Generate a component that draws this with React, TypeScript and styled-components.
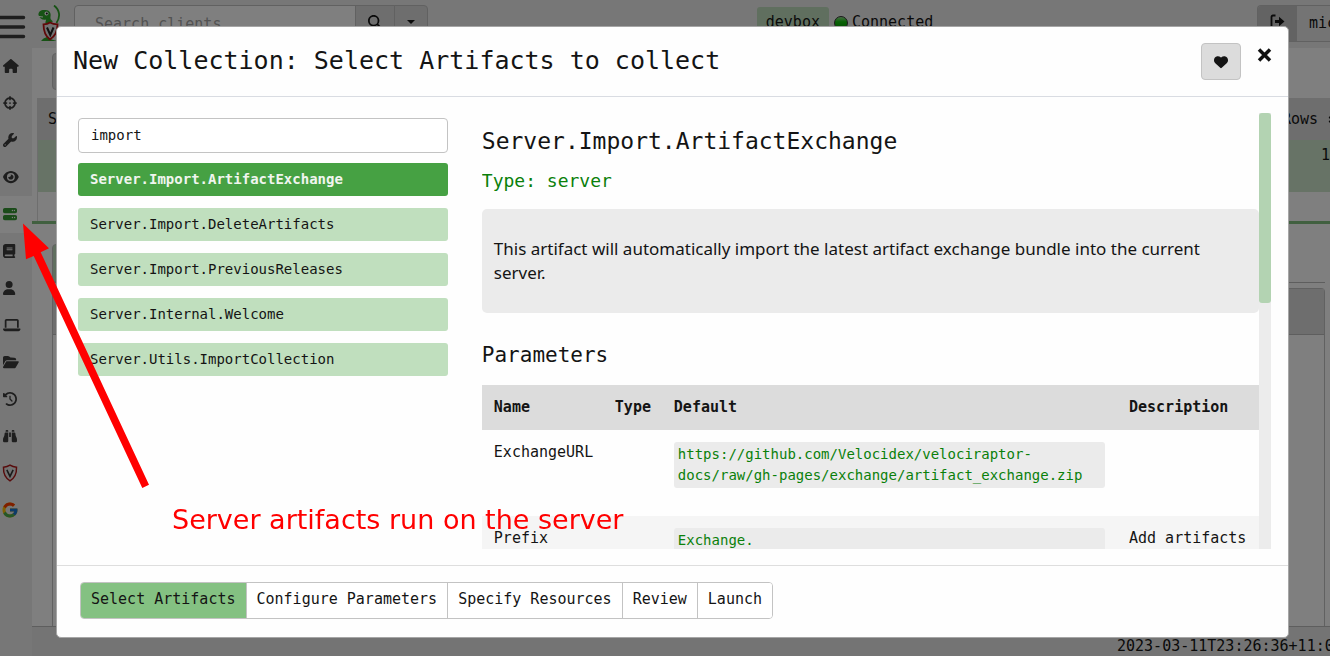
import React from "react";
import styled, { createGlobalStyle, css } from "styled-components";
import { IconContext } from "react-icons";
import {
  FaHouse,
  FaCrosshairs,
  FaWrench,
  FaEye,
  FaServer,
  FaBook,
  FaUser,
  FaLaptop,
  FaFolderOpen,
  FaClockRotateLeft,
  FaBinoculars,
  FaMagnifyingGlass,
  FaHeart,
  FaSort,
} from "react-icons/fa6";
import { FcGoogle } from "react-icons/fc";

const mono = '"DejaVu Sans Mono", "Liberation Mono", monospace';

const GlobalStyle = createGlobalStyle`
  *, *::before, *::after { box-sizing: border-box; }
  html, body { margin: 0; padding: 0; overflow: hidden; }
  body { font-family: ${mono}; font-size: 15px; line-height: 21px; color: #141414; background: #fff; }
  button, input { font: inherit; color: inherit; margin: 0; }
  button { cursor: pointer; }
  h1, h2, h3, p { margin: 0; font-weight: 400; }
`;

/* ---------- page behind the dialog ---------- */

const Page = styled.div`
  display: flex;
  flex-direction: column;
  height: 100vh;
  overflow: hidden;
`;

const TopBar = styled.header`
  flex: none;
  display: flex;
  justify-content: space-between;
  align-items: flex-start;
  height: 48px;
  padding-top: 5px;
  background: #efefef;
`;

const BarGroup = styled.div`
  display: flex;
  align-items: flex-start;
`;

const HostGroup = styled(BarGroup)`
  padding-left: 5px;
`;

const MenuButton = styled.button`
  width: 26px;
  height: 37px;
  padding: 8px 0 0;
  border: 0;
  background: none;
  svg { display: block; }
`;

const LogoBox = styled.div`
  width: 48px;
  padding-left: 12px;
  svg { display: block; }
`;

const SearchBox = styled.input`
  width: 282px;
  height: 37px;
  padding: 0 20px;
  border: 1px solid #c3c3c3;
  border-radius: 4px 0 0 4px;
  background: #fff;
  &::placeholder { color: #a4a4a4; opacity: 1; }
`;

const ToolButton = styled.button<{ $width: number; $last?: boolean }>`
  display: flex;
  align-items: center;
  justify-content: center;
  width: ${(p) => p.$width}px;
  height: 37px;
  padding: 0 0 4px;
  margin-left: -1px;
  border: 1px solid #c3c3c3;
  border-radius: ${(p) => (p.$last ? "0 4px 4px 0" : "0")};
  background: #dcdcdc;
`;

const Host = styled.button`
  height: 31px;
  padding: 0 9px;
  margin: 2px 5px 0 0;
  border: 0;
  border-radius: 3px;
  background: #c0dfbe;
`;

const Status = styled.span`
  display: flex;
  align-items: center;
  gap: 4px;
  height: 35px;
`;

const StatusLight = styled.i`
  width: 14px;
  height: 14px;
  border: 1px solid #333;
  border-radius: 50%;
  background: linear-gradient(#8fdc8a, #12c40c 40%, #0a9a06);
`;

const UserGroup = styled.div`
  display: flex;
  width: 73px;
  height: 37px;
  overflow: hidden;
  border: 1px solid #c3c3c3;
  border-right: 0;
  border-radius: 4px 0 0 4px;
  background: #e8e8e8;
`;

const LogoutButton = styled.button`
  flex: none;
  width: 39px;
  padding: 0;
  border: 0;
  background: #c6c6c6;
  svg { display: block; height: 15px; width: auto; margin: 0 auto 4px; }
`;

const UserName = styled.span`
  padding: 7px 12px;
`;

const Columns = styled.div`
  flex: 1;
  display: flex;
  min-height: 0;
`;

const SideBar = styled.nav`
  flex: none;
  width: 32px;
  background: #efefef;
`;

const SideLink = styled.a<{ $active?: boolean; $large?: boolean }>`
  display: flex;
  align-items: center;
  height: 37px;
  padding: 0 0 1px ${(p) => (p.$large ? 1 : 3)}px;
  color: ${(p) => (p.$active ? "#369634" : "#3c3c3c")};
  background: ${(p) => (p.$active ? "#fff" : "transparent")};
  svg { height: ${(p) => (p.$large ? 18 : 14)}px; width: 18px; }
`;

const Main = styled.main`
  flex: 1;
  min-width: 0;
  display: flex;
  flex-direction: column;
`;

const Actions = styled.div`
  height: 50px;
  padding: 5px 20px;
`;

const ActionBox = styled.div`
  width: 200px;
  height: 37px;
  border: 1px solid #c3c3c3;
  border-radius: 4px;
  background: #dcdcdc;
`;

const FlowTable = styled.table`
  width: calc(100% - 5px);
  margin-left: 5px;
  border-collapse: collapse;
  border-left: 1px solid #dcdcdc;
  th { height: 42px; padding: 0 10px; font-weight: 400; text-align: left; background: #dcdcdc; }
  th:last-child { padding: 0; width: 48px; }
  td { height: 52px; padding: 5px 0 0; vertical-align: top; text-align: right; background: #cfe6cd; }
`;

const SortHead = styled.span`
  display: flex;
  align-items: center;
  gap: 8px;
  width: 48px;
  svg { flex: none; }
`;

const Divider = styled.div`
  height: 29px;
  margin-left: 5px;
  border-left: 1px solid #dcdcdc;
`;

const Splitter = styled.div`
  height: 3px;
  flex: none;
  background: #83c181;
`;

const Details = styled.section`
  flex: 1;
  display: flex;
  flex-direction: column;
  padding: 20px 5px 0 20px;
`;

const TabStrip = styled.div`
  height: 39px;
  border-bottom: 1px solid #bdbdbd;
`;

const Tab = styled.div`
  width: 120px;
  height: 38px;
  border: 1px solid #c3c3c3;
  border-radius: 4px 4px 0 0;
  background: #c0dfbe;
`;

const Card = styled.div`
  flex: 1;
  margin-top: 5px;
  border: 1px solid #c3c3c3;
  border-bottom: 0;
  border-radius: 4px 4px 0 0;
`;

const CardHead = styled.div`
  height: 46px;
  border-bottom: 1px solid #bdbdbd;
  background: #dcdcdc;
`;

const Footer = styled.footer`
  flex: none;
  display: flex;
  justify-content: flex-end;
  height: 30px;
  padding-top: 9px;
  overflow: hidden;
  border-top: 1px solid #bdbdbd;
  background: #e8e8e8;
`;

const Clock = styled.time`
  flex: 0 0 213px;
  min-width: 0;
  white-space: nowrap;
`;

/* ---------- dialog ---------- */

const Backdrop = styled.div`
  position: fixed;
  inset: 0;
  padding: 26px 41px 18px 56px;
  background: rgba(0, 0, 0, 0.5);
`;

const Dialog = styled.div`
  border: 1px solid #a6a6a6;
  border-radius: 5px;
  background: #fefefe;
`;

const DialogHead = styled.div`
  display: flex;
  justify-content: space-between;
  align-items: flex-start;
  height: 70px;
  padding: 16px;
  border-bottom: 1px solid #d9dce2;
`;

const Title = styled.h1`
  font-size: 25px;
  line-height: 36px;
`;

const HeadButtons = styled.div`
  display: flex;
  align-items: flex-start;
  gap: 16px;
`;

const HeartButton = styled.button`
  display: flex;
  align-items: center;
  justify-content: center;
  width: 40px;
  height: 37px;
  padding: 0;
  border: 1px solid #c3c3c3;
  border-radius: 4px;
  background: #dcdcdc;
  svg { height: 14px; width: 14px; }
`;

const CloseButton = styled.button`
  width: 15px;
  height: 24px;
  padding: 0;
  border: 0;
  background: none;
  svg { display: block; }
`;

const DialogBody = styled.div`
  display: flex;
  gap: 34px;
  height: calc(100vh - 188px);
  padding: 16px 17px 16px 21px;
`;

const Picker = styled.div`
  flex: 0 0 31%;
  padding-top: 5px;
`;

const Filter = styled.input`
  display: block;
  width: 100%;
  height: 35px;
  padding: 0 12px 2px;
  border: 1px solid #c3c3c3;
  border-radius: 4px;
  font-size: 14px;
  background: #fff;
`;

const ArtifactList = styled.div`
  display: flex;
  flex-direction: column;
  gap: 12px;
  margin-top: 10px;
`;

const Artifact = styled.button<{ $active?: boolean }>`
  height: 33px;
  padding: 0 12px;
  border: 0;
  border-radius: 3px;
  font-size: 14px;
  text-align: left;
  background: #c0dfbe;
  ${(p) =>
    p.$active &&
    css`
      background: #46a143;
      color: #f0f5ef;
      font-weight: 700;
    `}
`;

const Viewer = styled.div`
  flex: 1;
  min-width: 0;
  display: flex;
`;

const Description = styled.article`
  flex: 1;
  min-width: 0;
  overflow: hidden;
`;

const ArtifactName = styled.h2`
  padding-top: 12px;
  font-size: 23px;
  line-height: 32px;
`;

const ArtifactType = styled.h3`
  padding: 12px 0 16px;
  font-size: 18px;
  line-height: 24px;
  color: #0a800a;
`;

const Summary = styled.p`
  padding: 28px 12px;
  border-radius: 5px;
  font: 17px/24px "Noto Sans", sans-serif;
  background: #ebebeb;
`;

const SectionTitle = styled.h3`
  padding: 30px 0 18px;
  font-size: 21px;
  line-height: 24px;
`;

const Parameters = styled.table`
  width: 100%;
  table-layout: fixed;
  border-collapse: collapse;
  th, td { padding: 12px 0 12px 12px; text-align: left; vertical-align: top; }
  th { background: #dcdcdc; }
  tbody tr:nth-child(even) { background: #f5f5f5; }
`;

const NameCol = styled.col`width: 121px;`;
const TypeCol = styled.col`width: 59px;`;
const DescriptionCol = styled.col`width: 142px;`;

const Code = styled.pre`
  margin: 0 12px 16px 0;
  padding: 2px 4px;
  border-radius: 3px;
  font-family: ${mono};
  font-size: 14px;
  line-height: 21px;
  color: #0a800a;
  background: #ebebeb;
`;

const ScrollTrack = styled.div`
  flex: none;
  width: 12px;
  background: #ececec;
`;

const ScrollThumb = styled.div`
  height: 190px;
  border-radius: 3px;
  background: #b3d3b2;
`;

const DialogFoot = styled.div`
  padding: 16px 23px 18px;
  border-top: 1px solid #dedede;
`;

const Steps = styled.div`
  display: inline-flex;
  vertical-align: top;
  height: 37px;
  overflow: hidden;
  border: 1px solid #c3c3c3;
  border-radius: 4px;
`;

const Step = styled.button<{ $active?: boolean }>`
  padding: 0 10px 2px;
  border: 0;
  background: ${(p) => (p.$active ? "#84c182" : "#fff")};
  & + & { border-left: 1px solid #c3c3c3; }
`;

/* ---------- annotation ---------- */

const Arrow = styled.svg`
  position: absolute;
  left: 0;
  top: 200px;
`;

const Note = styled.div`
  position: absolute;
  left: 172px;
  top: 504px;
  font: 27px/32px "DejaVu Sans", sans-serif;
  color: #ff0000;
  white-space: nowrap;
`;

const Shield = () => (
  <svg viewBox="0 0 14 16" aria-hidden="true">
    <path d="M7 1 Q4.500 2.600 1.200 2.800 C1 8 2 12 7 15 C12 12 13 8 12.800 2.800 Q9.500 2.600 7 1Z" fill="#e4e4e4" stroke="#b01818" strokeWidth="1.300" />
    <path d="M4.200 5.200 L7 11 L9.800 5.200" fill="none" stroke="#333" strokeWidth="1.400" />
  </svg>
);

const Logo = () => (
  <svg width="24" height="38" viewBox="38 5 24 38" aria-hidden="true">
    <path d="M54 5.500 C60 10 60.500 17 56.500 23" fill="none" stroke="#2fa52b" strokeWidth="1.800" />
    <path d="M38.500 15 C38 11.500 41.500 9.500 45 10 C49 9.500 51.500 13 50.500 16.500 C50 18.500 51 20 53 21.500 L46 24 C44.500 22 46.500 20.500 46 19.500 C43 20.500 39.500 18.500 38.500 15Z" fill="#2fa52b" />
    <path d="M41 41 Q43 38 47 37 L50 39 L57 41Z" fill="#2fa52b" />
    <circle cx="46.500" cy="13.500" r="2" fill="#fff" />
    <circle cx="46.800" cy="13.500" r="1" fill="#111" />
    <path d="M39 16.500 L43 17" stroke="#fff" strokeWidth="1" />
    <path d="M50 22.500 Q47.500 24.200 43.500 24.300 C43.500 31 45 36 50 39.500 C55.500 36 57.500 31 57.500 24.300 Q53 24.200 50 22.500Z" fill="#e4e4e4" stroke="#c01212" strokeWidth="1.800" />
    <path d="M47 27.500 L50.300 35 L53.500 27.500" fill="none" stroke="#222" strokeWidth="2" />
  </svg>
);

const LogoutIcon = () => (
  <svg viewBox="0 0 15 15" aria-hidden="true">
    <path d="M5.500 1.500H3Q1.500 1.500 1.500 3V12Q1.500 13.500 3 13.500H5.500" fill="none" stroke="#141414" strokeWidth="1.800" />
    <path d="M5 6H9V2.800L14.500 7.500L9 12.200V9H5Z" fill="#141414" />
  </svg>
);

const sideLinks = [
  { label: "Home", icon: <FaHouse /> },
  { label: "Hunts", icon: <FaCrosshairs /> },
  { label: "Artifacts", icon: <FaWrench /> },
  { label: "Events", icon: <FaEye /> },
  { label: "Server", icon: <FaServer />, active: true },
  { label: "Notebooks", icon: <FaBook /> },
  { label: "Users", icon: <FaUser /> },
  { label: "Host", icon: <FaLaptop /> },
  { label: "Files", icon: <FaFolderOpen /> },
  { label: "History", icon: <FaClockRotateLeft /> },
  { label: "Monitor", icon: <FaBinoculars /> },
  { label: "Velociraptor", icon: <Shield />, large: true },
  { label: "Google", icon: <FcGoogle />, large: true },
];

const artifacts = [
  "Server.Import.ArtifactExchange",
  "Server.Import.DeleteArtifacts",
  "Server.Import.PreviousReleases",
  "Server.Internal.Welcome",
  "Server.Utils.ImportCollection",
];

const steps = ["Select Artifacts", "Configure Parameters", "Specify Resources", "Review", "Launch"];

export default function App() {
  return (
    <>
      <GlobalStyle />
      <Page>
        <TopBar>
          <BarGroup>
            <MenuButton aria-label="Menu">
              <svg width="26" height="28" viewBox="0 0 26 28">
                <path d="M0 3.500H23.500M0 13H23.500M0 22.500H23.500" stroke="#3c3c3c" strokeWidth="3.500" strokeLinecap="round" />
              </svg>
            </MenuButton>
            <LogoBox><Logo /></LogoBox>
            <SearchBox placeholder="Search clients" aria-label="Search clients" />
            <ToolButton $width={40} aria-label="Search"><FaMagnifyingGlass size={14} /></ToolButton>
            <ToolButton $width={34} $last aria-label="Search options">
              <svg width="8" height="4" viewBox="0 0 8 4"><path d="M0 0H8L4 4Z" fill="#141414" /></svg>
            </ToolButton>
          </BarGroup>
          <HostGroup>
            <Host>devbox</Host>
            <Status><StatusLight />Connected</Status>
          </HostGroup>
          <UserGroup>
            <LogoutButton aria-label="Log out"><LogoutIcon /></LogoutButton>
            <UserName>mic</UserName>
          </UserGroup>
        </TopBar>
        <Columns>
          <SideBar>
            <IconContext.Provider value={{ attr: { preserveAspectRatio: "xMinYMid" } }}>
              {sideLinks.map((l) => (
                <SideLink key={l.label} href="#" aria-label={l.label} $active={l.active} $large={l.large}>
                  {l.icon}
                </SideLink>
              ))}
            </IconContext.Provider>
          </SideBar>
          <Main>
            <Actions><ActionBox /></Actions>
            <FlowTable>
              <thead>
                <tr>
                  <th>S</th>
                  <th><SortHead>Rows<FaSort /></SortHead></th>
                </tr>
              </thead>
              <tbody>
                <tr><td colSpan={2}>1</td></tr>
              </tbody>
            </FlowTable>
            <Divider />
            <Splitter />
            <Details>
              <TabStrip><Tab /></TabStrip>
              <Card><CardHead /></Card>
            </Details>
            <Footer><Clock>2023-03-11T23:26:36+11:00</Clock></Footer>
          </Main>
        </Columns>
      </Page>

      <Backdrop>
        <Dialog role="dialog" aria-labelledby="dialog-title">
          <DialogHead>
            <Title id="dialog-title">New Collection: Select Artifacts to collect</Title>
            <HeadButtons>
              <HeartButton aria-label="Favourites"><FaHeart /></HeartButton>
              <CloseButton aria-label="Close">
                <svg width="15" height="24" viewBox="0 0 15 24">
                  <path d="M2 6.500L13 17.500M13 6.500L2 17.500" stroke="#111" strokeWidth="3.500" />
                </svg>
              </CloseButton>
            </HeadButtons>
          </DialogHead>
          <DialogBody>
            <Picker>
              <Filter defaultValue="import" aria-label="Filter artifacts" />
              <ArtifactList>
                {artifacts.map((name, i) => (
                  <Artifact key={name} $active={i === 0}>{name}</Artifact>
                ))}
              </ArtifactList>
            </Picker>
            <Viewer>
              <Description>
                <ArtifactName>Server.Import.ArtifactExchange</ArtifactName>
                <ArtifactType>Type: server</ArtifactType>
                <Summary>
                  This artifact will automatically import the latest artifact exchange bundle into the current server.
                </Summary>
                <SectionTitle>Parameters</SectionTitle>
                <Parameters>
                  <colgroup><NameCol /><TypeCol /><col /><DescriptionCol /></colgroup>
                  <thead>
                    <tr><th>Name</th><th>Type</th><th>Default</th><th>Description</th></tr>
                  </thead>
                  <tbody>
                    <tr>
                      <td>ExchangeURL</td>
                      <td />
                      <td><Code>https://github.com/Velocidex/velociraptor-<br />docs/raw/gh-pages/exchange/artifact_exchange.zip</Code></td>
                      <td />
                    </tr>
                    <tr>
                      <td>Prefix</td>
                      <td />
                      <td><Code>Exchange.</Code></td>
                      <td>Add artifacts</td>
                    </tr>
                  </tbody>
                </Parameters>
              </Description>
              <ScrollTrack><ScrollThumb /></ScrollTrack>
            </Viewer>
          </DialogBody>
          <DialogFoot>
            <Steps>
              {steps.map((name, i) => (
                <Step key={name} $active={i === 0}>{name}</Step>
              ))}
            </Steps>
          </DialogFoot>
        </Dialog>
      </Backdrop>

      <Arrow width="160" height="300" viewBox="0 200 160 300" aria-hidden="true">
        <path d="M23 223.500L49 248.300L40.700 252.300L149 484.700L142.300 488L33.700 256L26 259.300Z" fill="#ff0000" />
      </Arrow>
      <Note>Server artifacts run on the server</Note>
    </>
  );
}
